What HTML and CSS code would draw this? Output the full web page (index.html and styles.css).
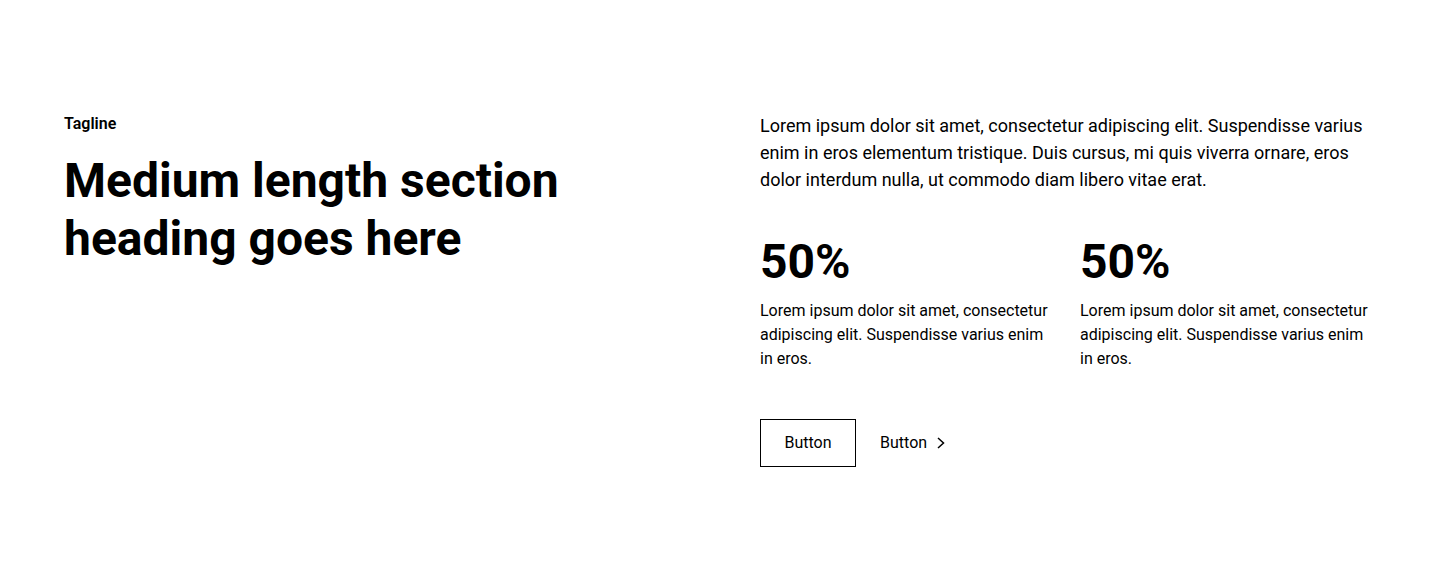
FILE: index.html
```html
<!DOCTYPE html>
<html lang="en">
<head>
<meta charset="utf-8">
<link rel="stylesheet" href="styles.css">
</head>
<body>
<section class="section">
  <div class="grid">
    <div class="left">
      <p class="tagline">Tagline</p>
      <h2 class="heading">Medium length section heading goes here</h2>
    </div>
    <div class="right">
      <p class="lead">Lorem ipsum dolor sit amet, consectetur adipiscing elit. Suspendisse varius enim in eros elementum tristique. Duis cursus, mi quis viverra ornare, eros dolor interdum nulla, ut commodo diam libero vitae erat.</p>
      <div class="stats">
        <div class="stat">
          <h3 class="stat-num">50%</h3>
          <p class="stat-text">Lorem ipsum dolor sit amet, consectetur adipiscing elit. Suspendisse varius enim in eros.</p>
        </div>
        <div class="stat">
          <h3 class="stat-num">50%</h3>
          <p class="stat-text">Lorem ipsum dolor sit amet, consectetur adipiscing elit. Suspendisse varius enim in eros.</p>
        </div>
      </div>
      <div class="actions">
        <a class="btn btn-outline" href="#">Button</a>
        <a class="btn btn-link" href="#">Button
          <svg class="chev" width="16" height="16" viewBox="0 0 16 16" fill="none"><path d="M5 3 L10.5 8 L5 13" stroke="#000" stroke-width="1.5"/></svg>
        </a>
      </div>
    </div>
  </div>
</section>
</body>
</html>
```
FILE: styles.css
```css
* { box-sizing: border-box; }
html, body { margin: 0; padding: 0; background: #fff; }
body { font-family: Roboto, "Noto Sans", "Liberation Sans", sans-serif; color: #000; }
.section { padding: 112px 64px; }
.grid { display: grid; grid-template-columns: 1fr 1fr; gap: 80px; }
.tagline { margin: 0 0 16px; font-size: 16px; line-height: 24px; font-weight: 600; }
.heading { margin: 0; font-size: 48px; line-height: 1.2; font-weight: 700; }
.lead { margin: 0; font-size: 18px; line-height: 27px; }
.stats { display: grid; grid-template-columns: 1fr 1fr; gap: 24px; margin-top: 40px; }
.stat-num { margin: 0 0 8px; font-size: 48px; line-height: 1.2; font-weight: 700; }
.stat-text { margin: 0; font-size: 16px; line-height: 24px; }
.actions { display: flex; align-items: center; gap: 24px; margin-top: 48px; }
.btn { font-size: 16px; line-height: 24px; color: #000; text-decoration: none; display: inline-flex; align-items: center; }
.btn-outline { padding: 11px 23.5px; border: 1px solid #000; }
.btn-link { gap: 6px; }
.chev { display: block; }
```
